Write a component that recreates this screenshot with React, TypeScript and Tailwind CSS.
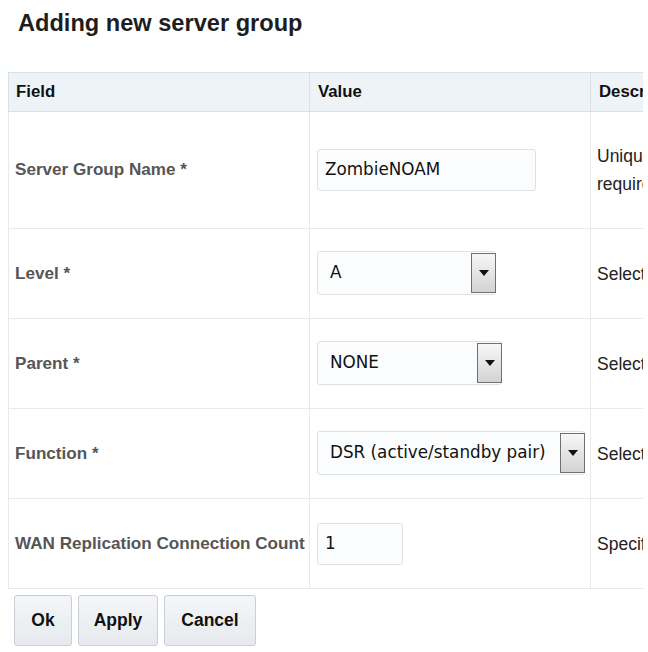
import React from "react";

const rows = [
    { label: "Server Group Name *", kind: "input", value: "ZombieNOAM", w: "w-[219px]", h: "h-[117px]", desc: ["Unique identifier used to label a Server Group.", "required"] },
    { label: "Level *", kind: "select", value: "A", w: "w-[179px]", h: "h-[90px]", desc: ["Select one of the Levels supported by the system."] },
    { label: "Parent *", kind: "select", value: "NONE", w: "w-[185px]", h: "h-[90px]", desc: ["Select an existing Server Group."] },
    { label: "Function *", kind: "select", value: "DSR (active/standby pair)", w: "w-[268px]", h: "h-[90px]", desc: ["Select one of the Functions supported by the system."] },
    { label: "WAN Replication Connection Count", kind: "input", value: "1", w: "w-[86px]", h: "h-[90px]", desc: ["Specify the number of TCP connections."] },
];

function Dropdown({ value, w }: { value: string; w: string }) {
    return (
        <div className={`${w} h-[44px] -mt-[2px] flex items-stretch rounded-[3px] border border-[#dde2e7] bg-[#fbfcfd]`}>
            <div className="flex-1 flex items-center pl-[12px] text-[16.8px] text-[#111] font-['DejaVu_Sans',sans-serif] whitespace-nowrap overflow-hidden">
                {value}
            </div>
            <div className="w-[25px] my-[1px] -mr-px border border-[#707070] bg-gradient-to-b from-[#f7f7f7] to-[#d3d3d3] flex items-center justify-center">
                <svg width="10" height="6" viewBox="0 0 10 6">
                    <path d="M0 0h10L5 6z" fill="#111" />
                </svg>
            </div>
        </div>
    );
}

function TextBox({ value, w }: { value: string; w: string }) {
    return (
        <div className={`${w} h-[42px] flex items-center rounded-[3px] border border-[#dde2e7] bg-[#fbfcfd] pl-[7px] text-[16.8px] text-[#111] font-['DejaVu_Sans',sans-serif]`}>
            {value}
        </div>
    );
}

export default function App() {
    return (
        <div className="w-[648px] h-[652px] bg-white font-['Liberation_Sans',Arial,sans-serif] overflow-hidden">
            <h1 className="pl-[18px] pt-[8px] text-[23.6px] font-bold text-[#1e1e1e] leading-[30px]">
                Adding new server group
            </h1>

            {/* Table, clipped on the right as in the dialog */}
            <div className="ml-[8px] mt-[34px] w-[635px] overflow-hidden">
                <table className="w-[900px] table-fixed border-collapse">
                    <colgroup>
                        <col className="w-[301px]" />
                        <col className="w-[281px]" />
                        <col className="w-[318px]" />
                    </colgroup>
                    <thead>
                        <tr className="h-[39px] bg-[#eef3f8]">
                            <th className="border border-[#d9e1e8] text-left pl-[7px] text-[16.8px] font-bold text-[#111]">Field</th>
                            <th className="border border-[#d9e1e8] text-left pl-[8px] text-[16.8px] font-bold text-[#111]">Value</th>
                            <th className="border border-[#d9e1e8] text-left pl-[8px] text-[16.8px] font-bold text-[#111]">Description</th>
                        </tr>
                    </thead>
                    <tbody>
                        {rows.map((r) => (
                            <tr key={r.label} className={r.h}>
                                <td className="border border-[#e7eaed] pl-[6px] align-middle text-[17.1px] font-bold text-[#565656] whitespace-nowrap">
                                    {r.label}
                                </td>
                                <td className="border border-[#e7eaed] pl-[7px] align-middle">
                                    {r.kind === "input" ? <TextBox value={r.value} w={r.w} /> : <Dropdown value={r.value} w={r.w} />}
                                </td>
                                <td className="border border-[#e7eaed] pl-[6px] pr-[8px] align-middle text-[17.5px] leading-[28px] text-[#222]">
                                    {r.desc.map((d) => (
                                        <div key={d} className="whitespace-nowrap">{d}</div>
                                    ))}
                                </td>
                            </tr>
                        ))}
                    </tbody>
                </table>
            </div>

            {/* Buttons */}
            <div className="flex gap-[6px] pl-[14px] pt-[6px]">
                {["Ok", "Apply", "Cancel"].map((b, i) => (
                    <button
                        key={b}
                        className={`${i === 0 ? "w-[58px]" : i === 1 ? "w-[80px]" : "w-[92px]"} h-[51px] rounded-[3px] border border-[#c8cfd6] bg-gradient-to-b from-[#f4f6f8] to-[#e6eaee] text-[17.5px] font-bold text-[#111]`}
                    >
                        {b}
                    </button>
                ))}
            </div>
        </div>
    );
}
